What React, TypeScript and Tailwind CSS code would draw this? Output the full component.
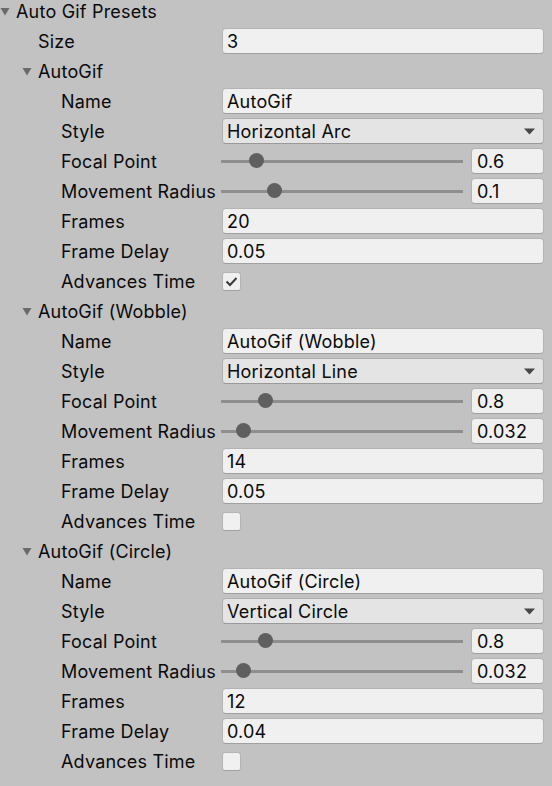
import React from "react";

const Tri = ({ className = "" }: { className?: string }) => (
  <svg width="10" height="9" viewBox="0 0 10 9" className={className}>
    <polygon points="0.5,1 9.5,1 5,8.5" fill="#6a6a6a" />
  </svg>
);

const Label = ({ children }: { children: React.ReactNode }) => (
  <div className="w-[161px] shrink-0 pl-[61px] whitespace-nowrap">{children}</div>
);

const Field = ({ v }: { v: string }) => (
  <div className="flex-1 h-[26px] mr-[8px] rounded-[4px] bg-[#f0f0f0] border border-[#b4b4b4] border-b-[#a0a0a0] flex items-center pl-[4px]">
    {v}
  </div>
);

const Row = ({ children }: { children: React.ReactNode }) => (
  <div className="h-[30px] flex items-center">{children}</div>
);

const FieldRow = ({ label, v }: { label: string; v: string }) => (
  <Row>
    <Label>{label}</Label>
    <div className="w-[61px] shrink-0" />
    <Field v={v} />
  </Row>
);

const Slider = ({ label, v, pos }: { label: string; v: string; pos: number }) => (
  <Row>
    <Label>{label}</Label>
    <div className="flex-1 flex items-center">
      <div className="relative w-[242px] ml-[60px] h-[16px] flex items-center">
        <div className="w-full h-[3px] bg-[#8e8e8e]" />
        <div
          className="absolute top-[0px] w-[15px] h-[15px] rounded-full bg-[#5f5f5f]"
          style={{ left: pos - 221 - 7.5 }}
        />
      </div>
      <div className="ml-[8px] w-[73px] h-[26px] mr-[8px] rounded-[4px] bg-[#f0f0f0] border border-[#b4b4b4] border-b-[#a0a0a0] flex items-center pl-[5px]">
        {v}
      </div>
    </div>
  </Row>
);

const Dropdown = ({ label, v }: { label: string; v: string }) => (
  <Row>
    <Label>{label}</Label>
    <div className="w-[61px] shrink-0" />
    <div className="flex-1 h-[26px] mr-[8px] rounded-[4px] bg-[#e4e4e4] border border-[#b0b0b0] border-b-[#999999] flex items-center pl-[4px] pr-[8px] justify-between">
      <span>{v}</span>
      <svg width="11" height="7" viewBox="0 0 11 7">
        <polygon points="0,0.5 11,0.5 5.5,6.5" fill="#474747" />
      </svg>
    </div>
  </Row>
);

const Check = ({ label, checked }: { label: string; checked: boolean }) => (
  <Row>
    <Label>{label}</Label>
    <div className="w-[61px] shrink-0" />
    <div className="w-[19px] h-[19px] rounded-[3px] bg-[#f0f0f0] border border-[#b4b4b4] border-b-[#a0a0a0] flex items-center justify-center">
      {checked && (
        <svg width="13" height="11" viewBox="0 0 13 11">
          <polyline points="1.5,5.5 5,9 11.5,2" fill="none" stroke="#3a3a3a" strokeWidth="2" />
        </svg>
      )}
    </div>
  </Row>
);

const Group = ({
  title,
  name,
  style,
  fp,
  fpPos,
  mr,
  mrPos,
  frames,
  delay,
  adv,
}: {
  title: string;
  name: string;
  style: string;
  fp: string;
  fpPos: number;
  mr: string;
  mrPos: number;
  frames: string;
  delay: string;
  adv: boolean;
}) => (
  <>
    <Row>
      <div className="pl-[22px] flex items-center">
        <Tri className="mr-[6px]" />
        <span>{title}</span>
      </div>
    </Row>
    <FieldRow label="Name" v={name} />
    <Dropdown label="Style" v={style} />
    <Slider label="Focal Point" v={fp} pos={fpPos} />
    <Slider label="Movement Radius" v={mr} pos={mrPos} />
    <FieldRow label="Frames" v={frames} />
    <FieldRow label="Frame Delay" v={delay} />
    <Check label="Advances Time" checked={adv} />
  </>
);

export default function App() {
  return (
    <div
      className="w-[552px] h-[786px] overflow-hidden bg-[#c2c2c2] text-[#0a0a0a] text-[18px] tracking-[0.2px]"
      style={{ fontFamily: "Inter, 'Noto Sans', sans-serif" }}
    >
      <div className="-mt-[4px]">
        <Row>
          <div className="pl-[0px] flex items-center">
            <Tri className="mr-[6px]" />
            <span>Auto Gif Presets</span>
          </div>
        </Row>
        <Row>
          <div className="w-[161px] shrink-0 pl-[38px]">Size</div>
          <div className="w-[61px] shrink-0" />
          <Field v="3" />
        </Row>
        <Group title="AutoGif" name="AutoGif" style="Horizontal Arc" fp="0.6" fpPos={256.5} mr="0.1" mrPos={274} frames="20" delay="0.05" adv={true} />
        <Group title="AutoGif (Wobble)" name="AutoGif (Wobble)" style="Horizontal Line" fp="0.8" fpPos={265} mr="0.032" mrPos={243} frames="14" delay="0.05" adv={false} />
        <Group title="AutoGif (Circle)" name="AutoGif (Circle)" style="Vertical Circle" fp="0.8" fpPos={265} mr="0.032" mrPos={243} frames="12" delay="0.04" adv={false} />
      </div>
    </div>
  );
}
